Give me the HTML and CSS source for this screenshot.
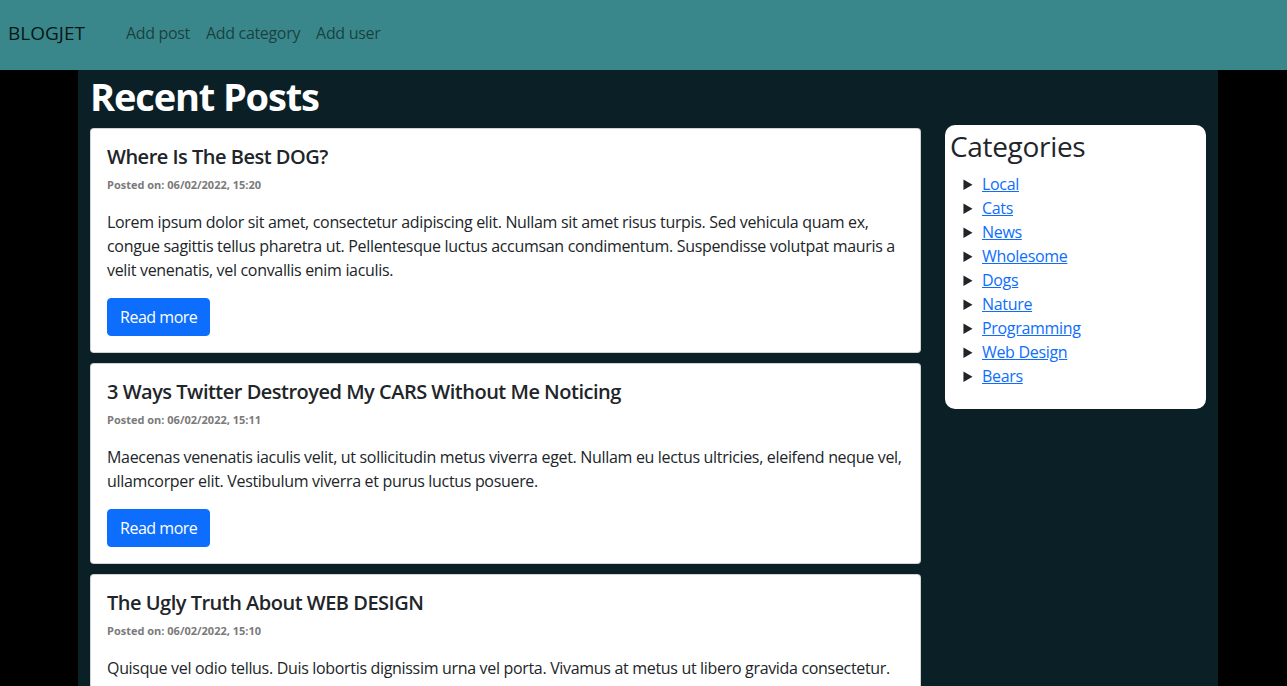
FILE: index.html
```html
<!DOCTYPE html>
<html lang="en">
<head>
<meta charset="utf-8">
<title>BlogJet</title>
<link rel="stylesheet" href="styles.css">
</head>
<body>
<nav class="navbar">
  <a class="brand" href="#">BLOGJET</a>
  <ul class="nav-links">
    <li><a href="#">Add post</a></li>
    <li><a href="#">Add category</a></li>
    <li><a href="#">Add user</a></li>
  </ul>
</nav>
<main class="container">
  <h1 class="page-title">Recent Posts</h1>
  <div class="row">
    <section class="posts">
      <article class="card">
        <h5 class="card-title">Where Is The Best DOG?</h5>
        <div class="meta">Posted on: 06/02/2022, 15:20</div>
        <p class="card-text">Lorem ipsum dolor sit amet, consectetur adipiscing elit. Nullam sit amet risus turpis. Sed vehicula quam ex, congue sagittis tellus pharetra ut. Pellentesque luctus accumsan condimentum. Suspendisse volutpat mauris a velit venenatis, vel convallis enim iaculis.</p>
        <a class="btn" href="#">Read more</a>
      </article>
      <article class="card">
        <h5 class="card-title">3 Ways Twitter Destroyed My CARS Without Me Noticing</h5>
        <div class="meta">Posted on: 06/02/2022, 15:11</div>
        <p class="card-text">Maecenas venenatis iaculis velit, ut sollicitudin metus viverra eget. Nullam eu lectus ultricies, eleifend neque vel, ullamcorper elit. Vestibulum viverra et purus luctus posuere.</p>
        <a class="btn" href="#">Read more</a>
      </article>
      <article class="card">
        <h5 class="card-title">The Ugly Truth About WEB DESIGN</h5>
        <div class="meta">Posted on: 06/02/2022, 15:10</div>
        <p class="card-text">Quisque vel odio tellus. Duis lobortis dignissim urna vel porta. Vivamus at metus ut libero gravida consectetur. Aliquam erat volutpat. Nunc vitae neque vel nibh tincidunt tincidunt.</p>
        <a class="btn" href="#">Read more</a>
      </article>
    </section>
    <aside class="sidebar">
      <div class="side-card">
        <h3 class="side-title">Categories</h3>
        <ul class="cat-list">
          <li><a href="#">Local</a></li>
          <li><a href="#">Cats</a></li>
          <li><a href="#">News</a></li>
          <li><a href="#">Wholesome</a></li>
          <li><a href="#">Dogs</a></li>
          <li><a href="#">Nature</a></li>
          <li><a href="#">Programming</a></li>
          <li><a href="#">Web Design</a></li>
          <li><a href="#">Bears</a></li>
        </ul>
      </div>
    </aside>
  </div>
</main>
</body>
</html>
```
FILE: styles.css
```css
* { box-sizing: border-box; }
html, body { margin: 0; padding: 0; }
body {
  background: #000;
  font-family: "Open Sans", "Noto Sans", sans-serif;
  font-size: 16px;
  line-height: 1.5;
  color: #212529;
  letter-spacing: -0.02em;
}
.navbar {
  height: 70px;
  background: #39878a;
  display: flex;
  align-items: flex-start;
  padding: 18px 8px 22px;
}
.brand {
  font-size: 19px;
  line-height: 30px;
  letter-spacing: 0;
  color: rgba(0,0,0,0.85);
  text-decoration: none;
  margin-right: 41px;
}
.nav-links {
  list-style: none;
  margin: 0;
  padding: 0;
  display: flex;
  gap: 16px;
  align-items: center;
  height: 30px;
}
.nav-links a {
  color: rgba(0,0,0,0.55);
  text-decoration: none;
  font-size: 16px;
  line-height: 24px;
}
.container {
  width: 1140px;
  margin-left: 78px;
  background: #0a1f26;
  padding: 0 12px;
  min-height: 616px;
}
.page-title {
  margin: 0 0 5px;
  padding-top: 2px;
  font-size: 38px;
  line-height: 48px;
  font-weight: 700;
  letter-spacing: -0.03em;
  color: #fff;
}
.row {
  display: flex;
  gap: 24px;
  align-items: flex-start;
}
.posts {
  width: 831px;
  padding-top: 3px;
}
.card {
  background: #fff;
  border: 1px solid rgba(0,0,0,0.175);
  border-radius: 4px;
  padding: 16px;
  margin-bottom: 10px;
}
.card-title {
  margin: 0 0 8px;
  font-size: 20px;
  line-height: 24px;
  font-weight: 600;
  letter-spacing: -0.025em;
}
.meta {
  font-size: 11px;
  line-height: 16px;
  font-weight: 700;
  color: #7a7a7a;
  margin-bottom: 17px;
  letter-spacing: 0;
}
.card-text {
  margin: 0 0 16px;
}
.btn {
  display: inline-block;
  background: #0d6efd;
  color: #fff;
  text-decoration: none;
  border: 1px solid #0d6efd;
  border-radius: 4px;
  padding: 6px 12px;
  line-height: 24px;
  font-size: 16px;
  letter-spacing: -0.03em;
}
.sidebar {
  width: 261px;
}
.side-card {
  background: #fff;
  border-radius: 10px;
  padding: 5px;
}
.side-title {
  margin: 0 0 8px;
  font-size: 28px;
  line-height: 33.6px;
  font-weight: 500;
}
.cat-list {
  list-style-type: disclosure-closed;
  margin: 0 0 16px;
  padding-left: 32px;
}
.cat-list a {
  color: #0d6efd;
  text-decoration: underline;
}
```
